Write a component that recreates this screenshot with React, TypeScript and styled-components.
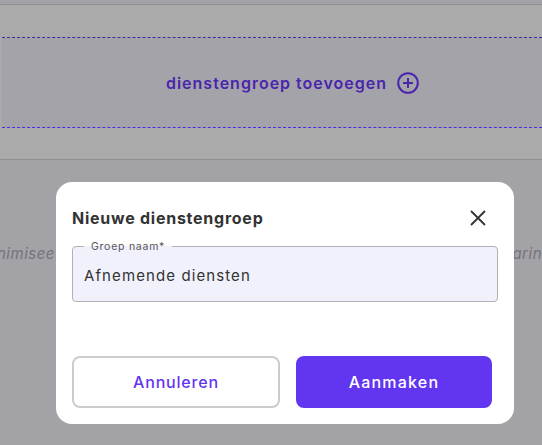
import React from 'react';
import styled, { createGlobalStyle } from 'styled-components';

const GlobalStyle = createGlobalStyle`
  html, body {
    margin: 0;
    padding: 0;
    background: #a3a2a7;
    font-family: Inter, "Liberation Sans", sans-serif;
  }
`;

const Page = styled.div`
  position: relative;
  width: 542px;
  height: 445px;
  overflow: hidden;
  padding-top: 4px;
  box-sizing: border-box;
  background: #a3a2a7;
`;

const Band = styled.section`
  height: 156px;
  box-sizing: border-box;
  padding-top: 32px;
  background: #aaaaaa;
  border-top: 1px solid #8f8e92;
  border-bottom: 1px solid #8f8e92;
`;

const AddZone = styled.div`
  height: 91px;
  box-sizing: border-box;
  margin-left: 2px;
  display: flex;
  align-items: center;
  justify-content: center;
  gap: 10px;
  padding-left: 41px;
  background: #a4a3a9;
  border-top: 1px dashed #43289a;
  border-bottom: 1px dashed #5028e6;
`;

const AddLabel = styled.span`
  font-size: 16px;
  font-weight: 600;
  letter-spacing: 1px;
  color: #4a25ad;
`;

const HintRow = styled.div`
  display: flex;
  justify-content: space-between;
  margin-top: 85px;
  font-size: 15px;
  font-style: italic;
  line-height: 18px;
  letter-spacing: 0.5px;
  color: #75747c;
`;

const HintLeft = styled.span`
  margin-left: -3px;
`;

const HintRight = styled.span`
  margin-right: 0;
`;

const Overlay = styled.div`
  position: absolute;
  left: 56px;
  top: 182px;
`;

const Modal = styled.div`
  width: 458px;
  height: 242px;
  box-sizing: border-box;
  padding: 24px 16px 16px;
  display: flex;
  flex-direction: column;
  background: #ffffff;
  border-radius: 16px;
`;

const ModalHeader = styled.div`
  display: flex;
  align-items: center;
  justify-content: space-between;
  height: 24px;
  padding-right: 12px;
`;

const Title = styled.h2`
  margin: 0;
  font-size: 16px;
  font-weight: 700;
  letter-spacing: 0.75px;
  color: #333333;
`;

const CloseButton = styled.button`
  display: flex;
  padding: 0;
  border: 0;
  background: none;
`;

const Field = styled.div`
  position: relative;
  margin-top: 16px;
  height: 56px;
  box-sizing: border-box;
  padding: 3px 0 0 11px;
  display: flex;
  align-items: center;
  background: #f1f1fb;
  border: 1px solid #b2b1b6;
  border-radius: 4px;
`;

const FieldLabel = styled.label`
  position: absolute;
  left: 11px;
  top: -7px;
  padding: 0 7px;
  font-size: 10.5px;
  line-height: 13px;
  letter-spacing: 0.75px;
  color: #55555a;
  background: linear-gradient(#ffffff 50%, #f1f1fb 50%);
`;

const FieldValue = styled.span`
  font-size: 15px;
  letter-spacing: 1.1px;
  color: #333333;
`;

const Footer = styled.div`
  display: flex;
  gap: 16px;
  margin-top: auto;
  padding-right: 6px;
`;

const Button = styled.button<{ $primary?: boolean }>`
  height: 52px;
  box-sizing: border-box;
  width: ${({ $primary }) => ($primary ? '196px' : '208px')};
  font-family: inherit;
  font-size: 16px;
  font-weight: 500;
  letter-spacing: ${({ $primary }) => ($primary ? '1.2px' : '0.8px')};
  border-radius: 8px;
  border: ${({ $primary }) => ($primary ? '0' : '2px solid #cccccc')};
  background: ${({ $primary }) => ($primary ? '#6236f0' : '#ffffff')};
  color: ${({ $primary }) => ($primary ? '#ffffff' : '#6236f0')};
`;

const App: React.FC = () => (
  <Page>
    <GlobalStyle />
    <Band>
      <AddZone>
        <AddLabel>dienstengroep toevoegen</AddLabel>
        <svg width="22" height="22" viewBox="0 0 22 22" fill="none" stroke="#4a25ad" strokeWidth="2">
          <circle cx="11" cy="11" r="9.8" />
          <path d="M11 6v10M6 11h10" />
        </svg>
      </AddZone>
    </Band>
    <HintRow>
      <HintLeft>nimisee</HintLeft>
      <HintRight>arin</HintRight>
    </HintRow>
    <Overlay>
      <Modal>
        <ModalHeader>
          <Title>Nieuwe dienstengroep</Title>
          <CloseButton aria-label="Sluiten">
            <svg width="16" height="16" viewBox="0 0 16 16" fill="none" stroke="#333333" strokeWidth="1.8">
              <path d="M1 1l14 14M15 1L1 15" />
            </svg>
          </CloseButton>
        </ModalHeader>
        <Field>
          <FieldLabel>Groep naam*</FieldLabel>
          <FieldValue>Afnemende diensten</FieldValue>
        </Field>
        <Footer>
          <Button>Annuleren</Button>
          <Button $primary>Aanmaken</Button>
        </Footer>
      </Modal>
    </Overlay>
  </Page>
);

export default App;
